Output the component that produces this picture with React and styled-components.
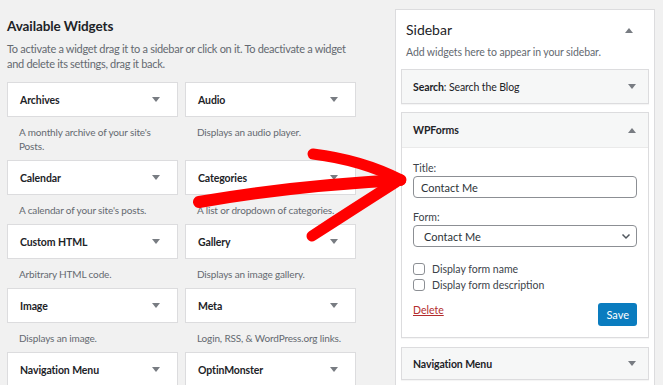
import React from "react";
import styled, { createGlobalStyle } from "styled-components";

const GlobalStyle = createGlobalStyle`
    body {
        margin: 0;
        background: #f1f1f1;
        font-family: Lato, "Open Sans", sans-serif;
        color: #1d2327;
    }
`;

const Page = styled.div`
    position: relative;
    display: flex;
    align-items: flex-start;
    gap: 38px;
    width: 663px;
    height: 385px;
    overflow: hidden;
    padding-left: 7px;
    box-sizing: border-box;
`;

const Left = styled.div`
    width: 350px;
    flex-shrink: 0;
`;

const Heading = styled.h2`
    margin: 16px 0 0;
    font-size: 13.5px;
    line-height: 20px;
    font-weight: 700;
    letter-spacing: -0.1px;
`;

const Intro = styled.p`
    margin: 5px 0 11px;
    font-size: 11px;
    line-height: 15px;
    letter-spacing: -0.3px;
    color: #646970;
`;

const Grid = styled.div`
    display: grid;
    grid-template-columns: 171px 171px;
    column-gap: 7px;
`;

const Card = styled.div`
    display: flex;
    align-items: center;
    justify-content: space-between;
    height: 35px;
    padding: 0 12px;
    box-sizing: border-box;
    background: #fff;
    border: 1px solid #dcdcde;
    font-size: 10.5px;
    letter-spacing: -0.1px;
    font-weight: 700;
`;

const Desc = styled.div`
    padding: 8px 12px 7px;
    font-size: 10px;
    line-height: 14px;
    letter-spacing: -0.15px;
    color: #646970;
`;

const Caret = styled.span`
    width: 0;
    height: 0;
    border-left: 4px solid transparent;
    border-right: 4px solid transparent;
    ${p => (p.$up ? "border-bottom" : "border-top")}: 5px solid #787c82;
    margin-right: ${p => p.$shift || 0}px;
`;

const Sidebar = styled.div`
    width: 260px;
    height: 400px;
    margin-top: 9px;
    flex-shrink: 0;
    background: #fff;
    border: 1px solid #dcdcde;
    box-sizing: border-box;
    padding: 0 5px;
`;

const SidebarHead = styled.div`
    display: flex;
    align-items: center;
    justify-content: space-between;
    padding: 10px 16px 0 5px;
    font-size: 14px;
    font-weight: 400;
    line-height: 20px;
`;

const SidebarNote = styled.div`
    padding: 5px 5px 0;
    font-size: 10.5px;
    letter-spacing: -0.1px;
    line-height: 15px;
    color: #646970;
    margin-bottom: 9px;
`;

const Widget = styled.div`
    border: 1px solid #dcdcde;
    background: #fff;
    margin-bottom: ${p => p.$mb || 8}px;
    box-shadow: 0 1px 1px rgba(0, 0, 0, 0.04);
`;

const WidgetTop = styled.div`
    display: flex;
    align-items: center;
    justify-content: space-between;
    height: ${p => p.$h || 33}px;
    padding: 0 12px 0 11px;
    background: #f6f7f7;
    font-size: 10.5px;
    letter-spacing: -0.1px;
    font-weight: 700;
    border-bottom: ${p => (p.$open ? "1px solid #eaeaea" : "none")};
`;

const Light = styled.span`
    font-weight: 400;
`;

const WidgetBody = styled.div`
    padding: 13px 11px 11px;
`;

const Label = styled.div`
    font-size: 10.5px;
    line-height: 14px;
    color: #3c434a;
    margin-bottom: 1px;
`;

const Field = styled.div`
    display: flex;
    align-items: center;
    justify-content: space-between;
    height: 22px;
    box-sizing: border-box;
    border: 1px solid #8c8f94;
    border-radius: 4px;
    padding: 0 ${p => (p.$select ? "4px 0 10px" : "7px")};
    font-size: 11px;
    color: #2c3338;
    margin-bottom: ${p => p.$mb || 0}px;
`;

const Check = styled.div`
    display: flex;
    align-items: center;
    gap: 7px;
    height: 16px;
    font-size: 10.5px;
    color: #3c434a;
`;

const Box = styled.span`
    width: 12px;
    height: 12px;
    border: 1px solid #8c8f94;
    border-radius: 3px;
    box-sizing: border-box;
    background: #fff;
`;

const Actions = styled.div`
    display: flex;
    align-items: flex-start;
    justify-content: space-between;
    margin-top: 10px;
`;

const DeleteLink = styled.a`
    color: #b32d2e;
    font-size: 10.5px;
    line-height: 14px;
    text-decoration: underline;
`;

const SaveButton = styled.button`
    height: 23px;
    padding: 0 8px;
    border: none;
    border-radius: 3px;
    background: #0a7cbf;
    color: #fff;
    font-family: inherit;
    font-size: 11px;
`;

const Arrow = styled.svg`
    position: absolute;
    left: 0;
    top: 0;
    pointer-events: none;
`;

const widgets = [
    ["Archives", "A monthly archive of your site's Posts."],
    ["Audio", "Displays an audio player."],
    ["Calendar", "A calendar of your site's posts."],
    ["Categories", "A list or dropdown of categories."],
    ["Custom HTML", "Arbitrary HTML code."],
    ["Gallery", "Displays an image gallery."],
    ["Image", "Displays an image."],
    ["Meta", "Login, RSS, & WordPress.org links."],
    ["Navigation Menu", ""],
    ["OptinMonster", ""]
];

const Chevron = () => (
    <svg width="12" height="12" viewBox="0 0 12 12">
        <path d="M2.5 4.5 L6 8 L9.5 4.5" fill="none" stroke="#50575e" strokeWidth="1.5" />
    </svg>
);

export default function App() {
    return (
        <Page>
            <GlobalStyle />
            <Left>
                <Heading>Available Widgets</Heading>
                <Intro>
                    To activate a widget drag it to a sidebar or click on it. To deactivate a widget
                    and delete its settings, drag it back.
                </Intro>
                <Grid>
                    {widgets.map(([name, desc]) => (
                        <div key={name}>
                            <Card>
                                {name}
                                <Caret $shift={5} />
                            </Card>
                            {desc && <Desc>{desc}</Desc>}
                        </div>
                    ))}
                </Grid>
            </Left>
            <Sidebar>
                <SidebarHead>
                    Sidebar
                    <Caret $up />
                </SidebarHead>
                <SidebarNote>Add widgets here to appear in your sidebar.</SidebarNote>
                <Widget>
                    <WidgetTop>
                        <span>
                            Search<Light>: Search the Blog</Light>
                        </span>
                        <Caret />
                    </WidgetTop>
                </Widget>
                <Widget $mb={9}>
                    <WidgetTop $open $h={34}>
                        WPForms
                        <Caret $up />
                    </WidgetTop>
                    <WidgetBody>
                        <Label>Title:</Label>
                        <Field $mb={12}>Contact Me</Field>
                        <Label>Form:</Label>
                        <Field $select $mb={14}>
                            Contact Me
                            <Chevron />
                        </Field>
                        <Check>
                            <Box />
                            Display form name
                        </Check>
                        <Check>
                            <Box />
                            Display form description
                        </Check>
                        <Actions>
                            <DeleteLink>Delete</DeleteLink>
                            <SaveButton>Save</SaveButton>
                        </Actions>
                    </WidgetBody>
                </Widget>
                <Widget>
                    <WidgetTop $h={31}>
                        Navigation Menu
                        <Caret />
                    </WidgetTop>
                </Widget>
            </Sidebar>
            <Arrow width="663" height="385" viewBox="0 0 663 385">
                <g fill="none" stroke="#f00" strokeLinecap="round" strokeLinejoin="round">
                    <path d="M199 202 Q 290 186 400 180" strokeWidth="12" />
                    <path d="M313 154 Q 362 160 401 180" strokeWidth="11" />
                    <path d="M312 236 Q 352 210 396 182" strokeWidth="11" />
                </g>
            </Arrow>
        </Page>
    );
}
